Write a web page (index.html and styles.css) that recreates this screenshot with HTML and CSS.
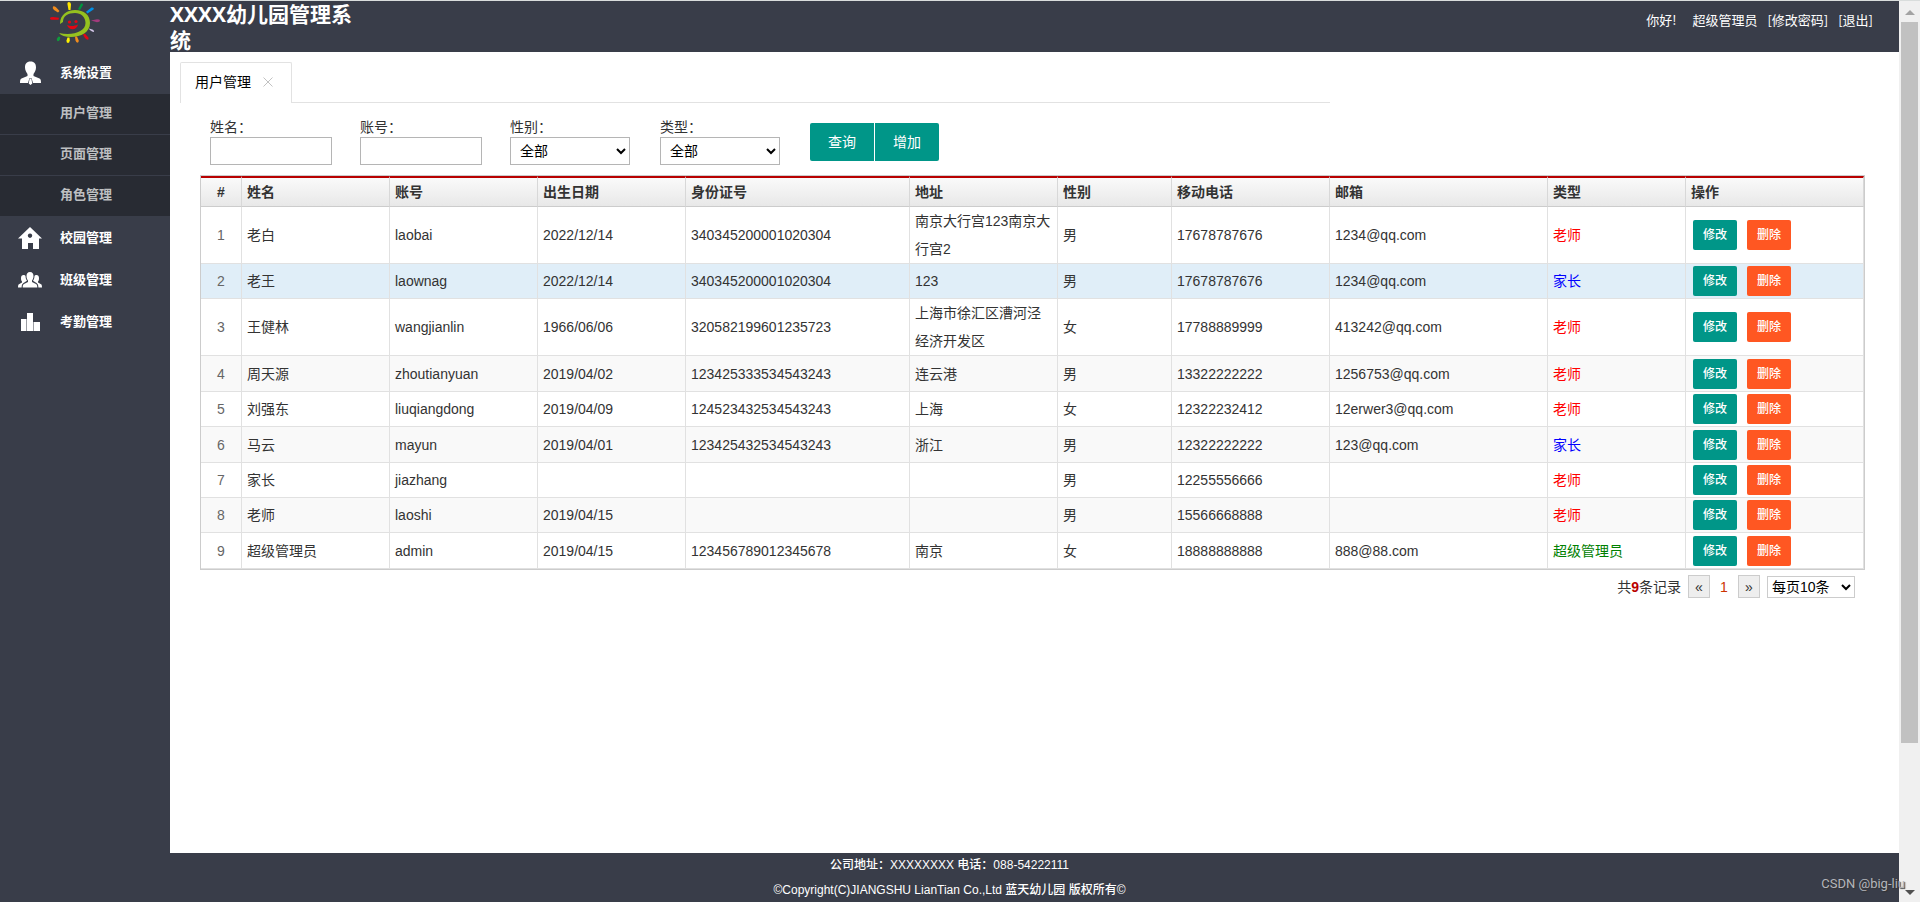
FILE: index.html
```html
<!DOCTYPE html>
<html lang="zh-CN">
<head>
<meta charset="utf-8">
<title>XXXX幼儿园管理系统</title>
<link rel="stylesheet" href="styles.css">
</head>
<body>
<div class="app">
  <header class="header">
    <div class="logo">
      <svg width="50" height="42" viewBox="0 0 50 42" role="img" aria-label="标志">
        <path d="M10 22C10 12 18 8 25 8c9 0 15 5 15 13 0 9-9 14-19 14-6 0-10-1.500-12-4 13 3 26.500-1 26.500-10 0-6-4.500-10-10.500-10-7 0-12 3-12 9z" fill="#95c11f"/>
        <path d="M17.500 2.500Q17 0 19 0T21 2.500L20.500 8h-2z" fill="#ffe600"/>
        <path d="M31 1.500q2.500-.5 2 1.500l-3 5-2-.8z" fill="#00963f"/>
        <path d="M41.500 5.500q3-.3 2 2l-6 4-1.500-1.700z" fill="#0090e8"/>
        <path d="M41 18.500l6-1.200q3 0 3 1.400t-3 1.500z" fill="#a23a7c"/>
        <path d="M39 26.500l4 1.200q1.800 1.300.8 2.300-1.500 0-4-2z" fill="#d5c8ea"/>
        <path d="M33 32.500l2-.8 3.500 4q.7 2-1 2-1.500-.2-3-2.500z" fill="#e30613"/>
        <path d="M25 34.500h2l1.700 4q.3 2-1.200 2.200-1.500-.2-2-2.500z" fill="#f28c1c"/>
        <path d="M17.500 35.500h2l.3 3q-.3 2.500-2 2.500-1.500-.5-1.300-2.500z" fill="#fff200"/>
        <path d="M8.500 34.500l1.800.5-.5 3q-1 1.500-2.500 1-.8-1.500-.3-2.500z" fill="#109a3c"/>
        <path d="M3 4.500q1-1 3 .8L9.500 9 8 10.500 4 8Q2 6 3 4.500z" fill="#f28c1c"/>
        <path d="M0 16.300Q0 15 3 15l6 .8-.5 1.900L3 17.800Q0 17.800 0 16.300z" fill="#e30613"/>
        <circle cx="19.500" cy="20" r="1.600" fill="#e30613"/><circle cx="26" cy="19.500" r="1.600" fill="#e30613"/>
        <path d="M17 23c4 1.500 7 1.300 11-.5-1 5.500-8.500 7-11 .5z" fill="#e30613"/>
      </svg>
    </div>
    <h1 class="title">XXXX幼儿园管理系统</h1>
    <nav class="user">
      <span class="hello">你好!</span>
      <span>超级管理员</span>
      <a href="#">[修改密码]</a>
      <a href="#">[退出]</a>
    </nav>
  </header>
  <div class="body">
    <nav class="side">
      <a class="menu" href="#">
        <svg width="24" height="24" viewBox="0 0 24 24"><path d="M12.500 0.500c4 0 5.500 2.500 5.500 6 0 3-1.500 5-2.500 6.500v2l6 2.500c1.200.6 1.500 2 1.500 4.500h-8L13.500 17h-2L10 22H2c0-2.500.3-3.900 1.500-4.500L9.500 15v-2C8.500 11.500 7 9.500 7 6.500c0-3.500 1.500-6 5.500-6zM11.700 17.500h1.600l1 5L12.500 24l-1.800-1.500z"/></svg>
        系统设置</a>
      <div class="submenu">
        <a class="sub" href="#">用户管理</a>
        <a class="sub" href="#">页面管理</a>
        <a class="sub" href="#">角色管理</a>
      </div>
      <a class="menu" href="#">
        <svg width="24" height="24" viewBox="0 0 24 24"><path fill-rule="evenodd" d="M12 1L24 12.500h-3V23h-6v-6h-5v6H4V12.500H0zM12 7.500a2.200 2.200 0 1 0 .01 0z"/></svg>
        校园管理</a>
      <a class="menu" href="#">
        <svg width="24" height="24" viewBox="0 0 24 24"><path d="M12 4c2.500 0 3.500 2 3.500 4s-.8 3.500-1.500 4.500v1.500l4 2c1 .5 1.300 1.500 1.300 3.500H4.700c0-2 .3-3 1.300-3.500l4-2v-1.500C9.300 11.500 8.500 10 8.500 8S9.500 4 12 4zM5.500 7c1 0 1.600.4 2 1 .1 2 .6 3.500 1.500 4.800L5.500 15C4.300 15.700 3.700 17 3.600 19.500H0c0-2 .3-3 1-3.300l3-1.700v-1C3 12.500 3 11 3 10c0-2 1-3 2.500-3zM18.500 7c-1 0-1.600.4-2 1-.1 2-.6 3.500-1.500 4.800l3.500 2.200c1.200.7 1.800 2 1.900 4.500H24c0-2-.3-3-1-3.300l-3-1.700v-1c1-1 1-2.500 1-3.500 0-2-1-3-2.500-3z"/></svg>
        班级管理</a>
      <a class="menu" href="#">
        <svg width="24" height="24" viewBox="0 0 24 24"><path d="M3 9h5.500v12H3zM9 3h6v18H9zM15.500 12H22v9h-6.500z"/></svg>
        考勤管理</a>
    </nav>
    <main class="main">
      <div class="tabs">
        <div class="tab"><a href="#">用户管理</a>
          <button class="close" type="button" aria-label="关闭"><svg width="10" height="10" viewBox="0 0 10 10"><path d="M.5.5l9 9M9.500.5l-9 9"/></svg></button>
        </div>
      </div>
      <form class="filters">
        <div class="field"><label for="name">姓名：</label><input id="name" type="text"></div>
        <div class="field"><label for="account">账号：</label><input id="account" type="text"></div>
        <div class="field"><label for="sex">性别：</label><select id="sex"><option>全部</option></select></div>
        <div class="field"><label for="kind">类型：</label><select id="kind"><option>全部</option></select></div>
        <div class="actions"><button type="button">查询</button><button type="button">增加</button></div>
      </form>
      <table class="grid">
        <colgroup><col class="c-no"><col class="c-m"><col class="c-m"><col class="c-m"><col class="c-id"><col class="c-m"><col class="c-sex"><col class="c-tel"><col class="c-mail"><col class="c-kind"><col></colgroup>
        <thead><tr><th>#</th><th>姓名</th><th>账号</th><th>出生日期</th><th>身份证号</th><th>地址</th><th>性别</th><th>移动电话</th><th>邮箱</th><th>类型</th><th>操作</th></tr></thead>
        <tbody>
          <tr><td>1</td><td>老白</td><td>laobai</td><td>2022/12/14</td><td>340345200001020304</td><td>南京大行宫123南京大行宫2</td><td>男</td><td>17678787676</td><td>1234@qq.com</td><td class="teacher">老师</td><td><div class="ops"><button class="edit" type="button">修改</button><button class="del" type="button">删除</button></div></td></tr>
          <tr class="selected"><td>2</td><td>老王</td><td>laownag</td><td>2022/12/14</td><td>340345200001020304</td><td>123</td><td>男</td><td>17678787676</td><td>1234@qq.com</td><td class="parent">家长</td><td><div class="ops"><button class="edit" type="button">修改</button><button class="del" type="button">删除</button></div></td></tr>
          <tr><td>3</td><td>王健林</td><td>wangjianlin</td><td>1966/06/06</td><td>320582199601235723</td><td>上海市徐汇区漕河泾经济开发区</td><td>女</td><td>17788889999</td><td>413242@qq.com</td><td class="teacher">老师</td><td><div class="ops"><button class="edit" type="button">修改</button><button class="del" type="button">删除</button></div></td></tr>
          <tr><td>4</td><td>周天源</td><td>zhoutianyuan</td><td>2019/04/02</td><td>123425333534543243</td><td>连云港</td><td>男</td><td>13322222222</td><td>1256753@qq.com</td><td class="teacher">老师</td><td><div class="ops"><button class="edit" type="button">修改</button><button class="del" type="button">删除</button></div></td></tr>
          <tr><td>5</td><td>刘强东</td><td>liuqiangdong</td><td>2019/04/09</td><td>124523432534543243</td><td>上海</td><td>女</td><td>12322232412</td><td>12erwer3@qq.com</td><td class="teacher">老师</td><td><div class="ops"><button class="edit" type="button">修改</button><button class="del" type="button">删除</button></div></td></tr>
          <tr><td>6</td><td>马云</td><td>mayun</td><td>2019/04/01</td><td>123425432534543243</td><td>浙江</td><td>男</td><td>12322222222</td><td>123@qq.com</td><td class="parent">家长</td><td><div class="ops"><button class="edit" type="button">修改</button><button class="del" type="button">删除</button></div></td></tr>
          <tr><td>7</td><td>家长</td><td>jiazhang</td><td></td><td></td><td></td><td>男</td><td>12255556666</td><td></td><td class="teacher">老师</td><td><div class="ops"><button class="edit" type="button">修改</button><button class="del" type="button">删除</button></div></td></tr>
          <tr><td>8</td><td>老师</td><td>laoshi</td><td>2019/04/15</td><td></td><td></td><td>男</td><td>15566668888</td><td></td><td class="teacher">老师</td><td><div class="ops"><button class="edit" type="button">修改</button><button class="del" type="button">删除</button></div></td></tr>
          <tr><td>9</td><td>超级管理员</td><td>admin</td><td>2019/04/15</td><td>123456789012345678</td><td>南京</td><td>女</td><td>18888888888</td><td>888@88.com</td><td class="admin">超级管理员</td><td><div class="ops"><button class="edit" type="button">修改</button><button class="del" type="button">删除</button></div></td></tr>
        </tbody>
      </table>
      <div class="pager">
        <span>共<b>9</b>条记录</span>
        <button type="button" aria-label="上一页">«</button>
        <span class="current">1</span>
        <button type="button" aria-label="下一页">»</button>
        <select aria-label="每页条数"><option>每页10条</option></select>
      </div>
    </main>
  </div>
  <footer class="footer">
    <p>公司地址：XXXXXXXX 电话：088-54222111</p>
    <p>©Copyright(C)JIANGSHU LianTian Co.,Ltd 蓝天幼儿园 版权所有©</p>
  </footer>
</div>
<div class="scroll" aria-hidden="true">
  <svg width="10" height="5" viewBox="0 0 10 5"><path d="M5 0l5 5H0z" fill="#a3a3a3"/></svg>
  <div class="track"><div class="thumb"></div></div>
  <svg width="10" height="5" viewBox="0 0 10 5"><path d="M0 0h10L5 5z" fill="#505050"/></svg>
</div>
<div class="watermark">CSDN @big-liu</div>
</body>
</html>
```
FILE: styles.css
```css
* { box-sizing: border-box; }

body {
  margin: 0;
  min-height: 100vh;
  display: flex;
  position: relative;
  border-top: 1px solid #d9dddc;
  background: #fff;
  color: #333;
  font: 14px/20px "Liberation Sans", "Noto Sans CJK SC", sans-serif;
}
button, input, select { font: inherit; margin: 0; }
a { color: inherit; text-decoration: none; }

.app { flex: 1; min-width: 0; display: flex; flex-direction: column; }

.header { display: flex; height: 51px; background: #393d49; color: #fff; }
.logo { width: 170px; padding: 1px 0 0 50px; }
.logo svg { display: block; overflow: visible; }
.title {
  width: 200px;
  margin: 0;
  font: bold 21px/26px "Open Sans", "Noto Sans CJK SC", sans-serif;
}
.user {
  margin-left: auto;
  padding: 9px 26px 0 0;
  display: flex;
  gap: 10px;
  font-family: "Noto Sans CJK SC", sans-serif;
  font-size: 13px;
}
.hello { margin-right: 6px; }

.body { flex: 1; display: flex; }
.side { width: 170px; background: #393d49; color: #fff; font-size: 13px; font-weight: bold; }
.menu { display: flex; align-items: center; gap: 18px; height: 42px; padding-left: 18px; }
.menu svg { fill: #fff; }
.submenu { margin-bottom: 1px; background: #282b33; color: #bdbfc1; }
.sub { display: block; height: 41px; padding: 9px 0 0 60px; }
.sub:first-child { height: 40px; }
.sub + .sub { border-top: 1px solid #393d49; }

.main { flex: 1; min-width: 0; padding: 10px 34px 0 10px; }
.tabs { display: flex; max-width: 1150px; height: 41px; }
.tabs::after { content: ""; flex: 1; border-bottom: 1px solid #e2e2e2; }
.tab {
  display: flex;
  align-items: center;
  gap: 12px;
  width: 112px;
  padding: 0 0 2px 14px;
  border: 1px solid #e2e2e2;
  border-bottom: 0;
  border-radius: 2px 2px 0 0;
  color: #000;
}
.close { border: 0; padding: 0; background: none; line-height: 0; }
.close svg { stroke: #c2c2c2; fill: none; }

.filters { display: flex; padding: 14px 0 0 30px; height: 72px; }
.field { display: flex; flex-direction: column; width: 150px; }
.field label { line-height: 20px; }
.field input { width: 122px; height: 28px; border: 1px solid #b5b5b5; padding: 0 4px; }
.field select { width: 120px; height: 28px; border: 1px solid #b5b5b5; padding-left: 5px; background: #fff; color: #000; }
.actions { display: flex; gap: 1px; padding-top: 6px; }
.actions button { height: 38px; padding: 0 18px; border: 0; background: #009688; color: #fff; }
.actions button:first-child { border-radius: 2px 0 0 2px; }
.actions button:last-child { border-radius: 0 2px 2px 0; }

.grid {
  width: calc(100% - 20px);
  margin-left: 20px;
  table-layout: fixed;
  border-collapse: separate;
  border-spacing: 0;
  border: 1px solid #ccc;
}
.c-no { width: 41px; }
.c-m { width: 148px; }
.c-id { width: 224px; }
.c-sex { width: 114px; }
.c-tel { width: 158px; }
.c-mail { width: 218px; }
.c-kind { width: 138px; }
.grid th {
  height: 31px;
  padding: 0 5px;
  text-align: left;
  border-top: 2px solid #b80000;
  border-bottom: 1px solid #ccc;
  border-right: 1px solid #d8d8d8;
  background: linear-gradient(#fafafa, #e8e8e8);
}
.grid td {
  height: 35px;
  padding: 0 5px;
  line-height: 28px;
  border-bottom: 1px solid #e1e1e1;
  border-right: 1px solid #e1e1e1;
}
.grid tr:nth-child(even) td { background: #f9f9f9; }
.grid tr:nth-child(4) td, .grid tr:nth-child(6) td, .grid tr:nth-child(9) td { height: 36px; }
.grid tr.selected td { background: #e0eef8; }
.grid th:first-child, .grid td:first-child { text-align: center; }
.grid td:first-child { color: #666; }
.grid .teacher { color: #f00; }
.grid .parent { color: #00f; }
.grid .admin { color: #008000; }
.ops { display: flex; gap: 10px; padding-left: 2px; }
.ops button {
  width: 44px;
  height: 30px;
  padding: 0;
  border: 0;
  border-radius: 2px;
  color: #fff;
  font-size: 12px;
  font-weight: 500;
}
.edit { background: #009688; }
.del { background: #ff5722; }

.pager { display: flex; justify-content: flex-end; align-items: center; gap: 7px; padding: 5px 10px 0 0; }
.pager b { color: #b80000; }
.current { width: 14px; text-align: center; color: #c30; }
.pager button { width: 22px; height: 23px; padding: 0; border: 1px solid #ccc; background: #eee; color: #333; }
.pager select { width: 88px; height: 22px; border: 1px solid #ccc; padding: 0; background: #fff; color: #000; }

.footer { height: 49px; background: #393d49; color: #fff; text-align: center; font-size: 12px; font-weight: 500; line-height: 25px; }
.footer p { margin: 0; }

.scroll {
  width: 21px;
  display: flex;
  flex-direction: column;
  align-items: center;
  padding: 9px 0 7px;
  background: #f0f0f0;
}
.track { flex: 1; width: 17px; padding: 7px 0 10px; display: grid; grid-template-rows: 84% 1fr; }
.thumb { background: #c1c1c1; }
.watermark {
  position: absolute;
  right: 15px;
  bottom: 8px;
  color: #b4b6ba;
  font-family: Roboto, sans-serif;
  font-size: 13px;
  text-shadow: 1px 1px 1px #333;
}
```
